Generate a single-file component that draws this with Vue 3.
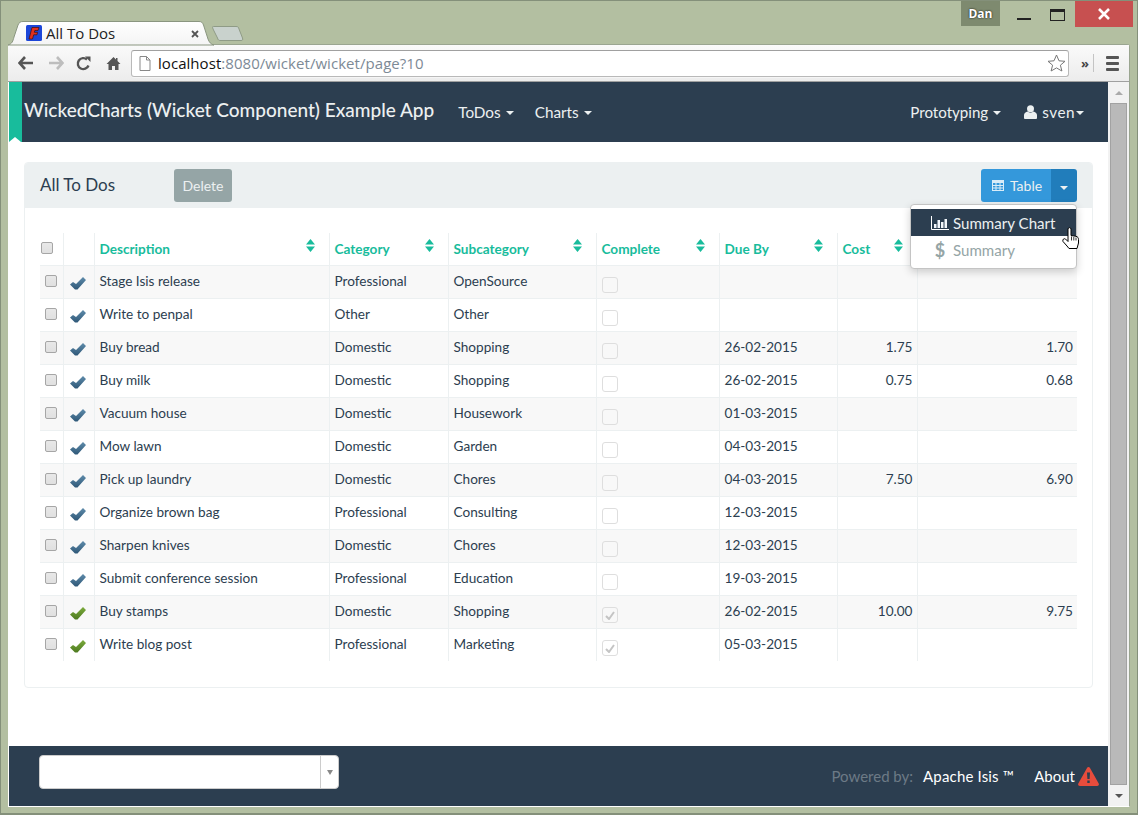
<script setup>
const rows = [
  { d: 'Stage Isis release', c: 'Professional', s: 'OpenSource', due: '', cost: '', x: '' },
  { d: 'Write to penpal', c: 'Other', s: 'Other', due: '', cost: '', x: '' },
  { d: 'Buy bread', c: 'Domestic', s: 'Shopping', due: '26-02-2015', cost: '1.75', x: '1.70' },
  { d: 'Buy milk', c: 'Domestic', s: 'Shopping', due: '26-02-2015', cost: '0.75', x: '0.68' },
  { d: 'Vacuum house', c: 'Domestic', s: 'Housework', due: '01-03-2015', cost: '', x: '' },
  { d: 'Mow lawn', c: 'Domestic', s: 'Garden', due: '04-03-2015', cost: '', x: '' },
  { d: 'Pick up laundry', c: 'Domestic', s: 'Chores', due: '04-03-2015', cost: '7.50', x: '6.90' },
  { d: 'Organize brown bag', c: 'Professional', s: 'Consulting', due: '12-03-2015', cost: '', x: '' },
  { d: 'Sharpen knives', c: 'Domestic', s: 'Chores', due: '12-03-2015', cost: '', x: '' },
  { d: 'Submit conference session', c: 'Professional', s: 'Education', due: '19-03-2015', cost: '', x: '' },
  { d: 'Buy stamps', c: 'Domestic', s: 'Shopping', due: '26-02-2015', cost: '10.00', x: '9.75', done: true },
  { d: 'Write blog post', c: 'Professional', s: 'Marketing', due: '05-03-2015', cost: '', x: '', done: true },
]
const heads = ['Description', 'Category', 'Subcategory', 'Complete', 'Due By', 'Cost']
</script>

<template>
  <div class="window">
    <div class="titlebar">
      <div class="tabstrip">
        <div class="tab">
          <svg class="tabshape" width="202" height="24" viewBox="0 0 202 24">
            <defs><linearGradient id="tabfill" x1="0" y1="0" x2="0" y2="1"><stop offset="0" stop-color="#fff" /><stop offset="1" stop-color="#f4f4f4" /></linearGradient></defs>
            <path d="M-4 24C0 23 1 20 2 16L6 4C7 1.500 8.500 .5 11 .5H187C189.500 .5 190.500 1.500 191.500 4L196 18C197 21 199 23.500 202 24Z" fill="url(#tabfill)" stroke="#8a9680" />
          </svg>
          <svg class="favicon" width="16" height="16" viewBox="0 0 16 16">
            <rect width="16" height="16" rx="1.500" fill="#1c46d8" />
            <path d="M6 2.500H13L12 5.500H8.800L8.300 7.300H11.500L11 9.800H7.700L6.500 14H3Z" fill="#e3301c" stroke="#401008" stroke-width=".7" />
          </svg>
          <span class="tabtitle">All To Dos</span>
          <svg class="tabclose" width="8" height="8" viewBox="0 0 8 8"><path d="M1 1L7 7M7 1L1 7" stroke="#555" stroke-width="1.800" /></svg>
        </div>
        <svg class="newtab" width="32" height="15" viewBox="0 0 32 15"><path d="M1.500 .5H24C26 .5 26.500 1 27 3L30.500 12C31 14 30.500 14.500 29 14.500H8C7 14.500 6 14 5.500 12L1 3C.5 1 0 .5 1.500 .5Z" fill="#c9d2cd" stroke="#8f9b86" /></svg>
      </div>
      <div class="winctrls">
        <div class="user">Dan</div>
        <div class="wbtn"><span class="min"></span></div>
        <div class="wbtn"><span class="max"></span></div>
        <div class="wclose"><svg width="14" height="12" viewBox="0 0 14 12"><path d="M2 1L12 11M12 1L2 11" stroke="#fff" stroke-width="2.600" /></svg></div>
      </div>
    </div>

    <div class="chrome">
      <div class="toolbar">
        <svg class="navicon first" width="16" height="14" viewBox="0 0 16 14"><path d="M7 1L1.500 7L7 13M2 7H15" fill="none" stroke="#555" stroke-width="2.600" /></svg>
        <svg class="navicon" width="16" height="14" viewBox="0 0 16 14"><path d="M9 1L14.500 7L9 13M14 7H1" fill="none" stroke="#bdbdbd" stroke-width="2.600" /></svg>
        <svg class="navicon reload" width="15" height="15" viewBox="0 0 15 15"><path d="M12.500 9.500A5.500 5.500 0 1 1 11 3.500" fill="none" stroke="#555" stroke-width="2.400" /><path d="M9 0.500H14.500V6Z" fill="#555" /></svg>
        <svg class="navicon" width="15" height="15" viewBox="0 0 15 15"><path d="M7.500 1L0.500 8H2.500V14H6V10H9V14H12.500V8H14.500L11.500 5V2H10V3.500Z" fill="#555" /></svg>
        <div class="omnibox">
          <svg width="12" height="15" viewBox="0 0 12 15"><path d="M1 .5H7.500L11 4V14.500H1Z M7.500 .5V4H11" fill="#fff" stroke="#888" /></svg>
          <span class="url"><b>localhost</b>:8080/wicket/wicket/page?10</span>
          <svg class="star" width="19" height="18" viewBox="0 0 19 18"><path d="M9.500 1L12 6.800L18 7.300L13.400 11.200L14.900 17L9.500 13.900L4.100 17L5.600 11.200L1 7.300L7 6.800Z" fill="#fff" stroke="#777" /></svg>
        </div>
        <span class="chev">»</span>
        <span class="tsep"></span>
        <div class="menu"><i></i><i></i><i></i></div>
      </div>

      <div class="viewport">
        <div class="page">
          <nav class="navbar">
            <div class="brandbar"></div>
            <span class="brand">WickedCharts (Wicket Component) Example App</span>
            <span class="navlink first">ToDos <i class="caret"></i></span>
            <span class="navlink">Charts <i class="caret"></i></span>
            <span class="spacer"></span>
            <span class="navlink proto">Prototyping <i class="caret"></i></span>
            <span class="navlink usr">
              <svg width="13" height="14" viewBox="0 0 13 14"><circle cx="6.500" cy="3.800" r="3.500" fill="#ecf0f1" /><path d="M0 13V10C0 8 2 7 3.500 6.500C5 8 8 8 9.500 6.500C11 7 13 8 13 10V13C13 13.500 12.500 14 12 14H1C.5 14 0 13.500 0 13Z" fill="#ecf0f1" /></svg>
              <span class="svenname">sven</span><i class="caret tight"></i>
            </span>
          </nav>

          <main class="main">
            <section class="panel">
              <header class="panelhead">
                <h1>All To Dos</h1>
                <button class="delete">Delete</button>
                <span class="spacer"></span>
                <div class="btngroup">
                  <button class="tablebtn">
                    <svg width="12" height="11" viewBox="0 0 12 11"><path d="M0 0H12V11H0Z M1 3V5H3.500V3Z M4.500 3V5H7.500V3Z M8.500 3V5H11V3Z M1 6V7.500H3.500V6Z M4.500 6V7.500H7.500V6Z M8.500 6V7.500H11V6Z M1 8.500V10H3.500V8.500Z M4.500 8.500V10H7.500V8.500Z M8.500 8.500V10H11V8.500Z" fill="#d9ecf8" fill-rule="evenodd" />
                    </svg>
                    Table
                  </button>
                  <button class="caretbtn"><i class="caret"></i></button>
                </div>
                <div class="dropdown">
                  <div class="ditem active">
                    <svg width="18" height="14" viewBox="0 0 18 14"><path d="M.5 0V13.500H18" fill="none" stroke="#fff" /><path d="M3 8H5.500V12H3Z M6.500 4H9V12H6.500Z M10 6H12.500V12H10Z M13.500 3H16V12H13.500Z" fill="#f2f6fa" /></svg>
                    <span>Summary Chart</span>
                  </div>
                  <div class="ditem">
                    <span class="dollar">$</span>
                    <span>Summary</span>
                  </div>
                </div>
                <svg class="cursor" width="17" height="22" viewBox="0 0 17 22"><path d="M6 2C6 .2 9 .2 9 2V8.500L14 9.300C15.800 9.700 16.500 11 16.500 12.500V16L15 21.500H7L5 19L1 14.500C.2 12.500 2 11 3.500 12L6 14.500Z" fill="#fff" stroke="#000" /><path d="M9.500 9.500V13.500M11.800 10V13.500M14 10.500V13.500" stroke="#000" stroke-width=".8" /></svg>
              </header>
              <div class="panelbody">
                <table class="grid">
                  <colgroup>
                    <col class="c1" /><col class="c2" /><col class="c3" /><col class="c4" /><col class="c5" /><col class="c6" /><col class="c7" /><col class="c8" /><col />
                  </colgroup>
                  <thead>
                    <tr>
                      <th class="boxcell"><span class="cb head"></span></th>
                      <th></th>
                      <th v-for="h in heads" :key="h">
                        <div class="th">
                          <span>{{ h }}</span>
                          <svg width="9" height="13" viewBox="0 0 9 13"><path d="M4.500 0L9 5.500H0Z M0 7.500H9L4.500 13Z" fill="#18bc9c" /></svg>
                        </div>
                      </th>
                      <th></th>
                    </tr>
                  </thead>
                  <tbody>
                    <tr v-for="(r, i) in rows" :key="r.d" :class="{ odd: i % 2 === 0 }">
                      <td class="boxcell"><span class="cb"></span></td>
                      <td class="checkcell">
                        <svg width="16" height="13" viewBox="0 0 16 13">
                          <defs>
                            <linearGradient id="chkb" x1="0" y1="0" x2="0" y2="1"><stop offset="0" stop-color="#5f8cab" /><stop offset="1" stop-color="#2f5878" /></linearGradient>
                            <linearGradient id="chkg" x1="0" y1="0" x2="0" y2="1"><stop offset="0" stop-color="#7cab3c" /><stop offset="1" stop-color="#4d7a20" /></linearGradient>
                          </defs>
                          <path d="M0 7.500L3 5L6 7L13 0L16 3L7.500 12.500H5Z" :fill="r.done ? 'url(#chkg)' : 'url(#chkb)'" />
                        </svg>
                      </td>
                      <td>{{ r.d }}</td>
                      <td>{{ r.c }}</td>
                      <td>{{ r.s }}</td>
                      <td class="completecell"><span class="ccb"><svg v-if="r.done" width="10" height="9" viewBox="0 0 10 9"><path d="M1 5L4 8L9 1" fill="none" stroke="#c4c4c4" stroke-width="2" /></svg></span></td>
                      <td>{{ r.due }}</td>
                      <td class="num">{{ r.cost }}</td>
                      <td class="num">{{ r.x }}</td>
                    </tr>
                  </tbody>
                </table>
              </div>
            </section>
          </main>

          <footer class="footer">
            <div class="select"><span class="selectarrow"><i></i></span></div>
            <span class="spacer"></span>
            <span class="powered">Powered by:</span>
            <span class="flink isis">Apache Isis ™</span>
            <span class="flink about">About</span>
            <svg class="warn" width="21" height="19" viewBox="0 0 21 19"><path d="M10.500 0C11.200 0 11.700.4 12 1L20.700 16.500C21.300 17.700 20.500 19 19.200 19H1.800C.5 19 -.3 17.700.3 16.500L9 1C9.300.4 9.800 0 10.500 0Z" fill="#e74c3c" /><path d="M9 5.500H12L11.600 12H9.400Z M9.300 13.500H11.700V16H9.300Z" fill="#2c3e50" /></svg>
          </footer>
        </div>
        <div class="scrollbar">
          <div class="sbbtn"><i class="up"></i></div>
          <div class="thumb"></div>
          <div class="sbbtn"><i class="down"></i></div>
        </div>
      </div>
    </div>
  </div>
</template>

<style>
html, body { margin: 0; height: 100%; overflow: hidden; }
</style>

<style scoped>
* { box-sizing: border-box; }
.window {
  width: 1138px; height: 815px; background: #b3bfa1; border: 1px solid #84907a;
  border-bottom-width: 2px; padding: 0 7px 6px 7px; display: flex; flex-direction: column;
  font-family: Lato, sans-serif; color: #2c3e50; overflow: hidden;
}
.titlebar { height: 43px; display: flex; justify-content: space-between; flex: none; }
.tabstrip { display: flex; align-items: flex-end; padding-left: 4px; margin-bottom: -1px; position: relative; z-index: 1; }
.tab { position: relative; width: 202px; height: 24px; display: flex; align-items: center; padding-left: 14px; font-family: "Open Sans", sans-serif; font-size: 15px; color: #222; }
.tabshape { position: absolute; left: 0; top: 0; overflow: visible; }
.favicon, .tabtitle, .tabclose { position: relative; }
.tabtitle { margin-left: 4px; width: 145px; }
.tabclose { margin-top: 1px; }
.newtab { margin: 0 0 4px -2px; }
.winctrls { display: flex; align-items: flex-start; margin-right: -3px; }
.user { width: 39px; height: 25px; background: #7e8a6f; color: #fff; font: 700 12px "Open Sans", sans-serif; display: flex; align-items: center; justify-content: center; text-shadow: 0 0 2px #000; }
.wbtn { width: 37.500px; height: 25px; display: flex; align-items: center; justify-content: center; }
.min { width: 14px; height: 2px; background: #222; margin-top: 11px; margin-left: 11px; }
.max { width: 15px; height: 12px; border: 1.500px solid #222; border-top-width: 3px; margin-top: 2px; margin-left: 3px; }
.wclose { width: 58px; height: 26px; background: #c75050; display: flex; align-items: center; justify-content: center; }
.chrome { flex: 1; display: flex; flex-direction: column; background: #fff; border: 1px solid #9aa590; border-bottom: 1px solid #fff; border-left: 0; border-radius: 3px 3px 0 0; min-height: 0; }
.toolbar { height: 37px; flex: none; background: linear-gradient(#fafafa, #ececec); display: flex; align-items: center; padding: 0 0 0 10px; border-bottom: 1px solid #a0a0a0; }
.navicon { margin-right: 12px; flex: none; }
.navicon.first { margin-right: 14px; }
.navicon.reload { margin-right: 15px; }
.omnibox { width: 938px; height: 27px; margin-left: -2px; background: #fff; border: 1px solid #b9b9b9; border-top-color: #a0a0a0; border-radius: 3px; display: flex; align-items: center; padding: 0 2px 0 7px; box-shadow: 0 1px 0 #f5f5f5; }
.url { font: 15px "Open Sans", sans-serif; color: #7d8a96; margin-left: 7px; flex: 1; letter-spacing: .05px; }
.url b { font-weight: 400; color: #111; }
.chev { font: 700 13px "Open Sans", sans-serif; color: #444; margin-left: 12px; }
.tsep { width: 1px; height: 18px; background: #c4c4c4; margin-left: 4px; }
.menu { margin-left: 12px; display: flex; flex-direction: column; gap: 3px; }
.menu i { display: block; width: 13px; height: 3px; background: #555; border-radius: 1px; }
.viewport { flex: 1; display: flex; min-height: 0; padding-left: 1px; }
.page { width: 1099px; flex: none; display: flex; flex-direction: column; }
.spacer { flex: 1; }
.navbar { position: relative; height: 60px; flex: none; background: #2c3e50; display: flex; align-items: center; padding: 0 24px 0 15px; color: #ecf0f1; }
.brandbar { position: absolute; left: 0; top: 0; width: 13px; height: 60px; background: #18bc9c; }
.brandbar::after { content: ""; position: absolute; left: 0; bottom: 0; border: 6.500px solid transparent; border-top: 0; border-bottom: 5px solid #fff; }
.brand { font-size: 19px; font-weight: 500; margin-top: -5px; white-space: nowrap; }
.navlink { font-size: 15.300px; display: flex; align-items: center; white-space: nowrap; margin-right: 21px; }
.navlink.first { margin-left: 24px; }
.navlink.proto { font-size: 15.100px; margin-right: 20px; }
.navlink.usr { margin-right: 0; margin-left: 3px; }
.navlink svg { margin-right: 5px; }
.svenname { letter-spacing: .5px; }
.caret { display: inline-block; width: 0; height: 0; border: 4px solid transparent; border-bottom: 0; border-top: 4px solid currentColor; margin-left: 5px; margin-top: 1px; }
.caret.tight { margin-left: 1px; }
.main { flex: 1; padding: 20px 15px 0; }
.panel { height: 526px; border: 1px solid #ecf0f1; border-radius: 4px; }
.panelhead { position: relative; height: 45px; background: #ecf0f1; display: flex; align-items: center; padding: 0 15px; border-radius: 3px 3px 0 0; }
h1 { margin: -2px 0 0; font-size: 17px; font-weight: 400; width: 134px; }
.delete { width: 58px; height: 33px; border: 0; border-radius: 3px; background: #95a5a6; color: #ecf0f1; font: 14px Lato, sans-serif; padding: 0; }
.btngroup { display: flex; height: 33px; }
.tablebtn { width: 70px; border: 0; border-radius: 3px 0 0 3px; background: #3498db; color: #ecf0f1; font: 14px Lato, sans-serif; padding: 0 0 0 2px; display: flex; align-items: center; justify-content: center; gap: 6px; }
.caretbtn { width: 26px; border: 0; border-radius: 0 3px 3px 0; background: #217dbb; color: #ecf0f1; padding: 0; }
.caretbtn .caret { margin: 0; }
.dropdown { position: absolute; right: 15px; top: 41px; width: 167px; height: 65px; background: #fff; border: 1px solid #c4c4c4; border-radius: 4px; padding: 4px 0; box-shadow: 0 3px 8px rgba(0,0,0,.18); z-index: 2; }
.ditem { height: 27px; display: flex; align-items: center; font-size: 15.100px; color: #95a5a6; }
.ditem.active { background: #2c3e50; color: #ecf0f1; }
.ditem svg { margin-left: 20px; margin-right: 4px; }
.dollar { width: 18px; margin-left: 20px; margin-right: 4px; text-align: center; font-size: 18px; font-weight: 700; }
.cursor { position: absolute; right: 13px; top: 64px; z-index: 3; }
.panelbody { padding: 25px 15px 0; }
.grid { width: 1037px; table-layout: fixed; border-collapse: collapse; font-size: 13.600px; }
.c1 { width: 23px; } .c2 { width: 31px; } .c3 { width: 235px; } .c4 { width: 119px; }
.c5 { width: 148px; } .c6 { width: 123px; } .c7 { width: 118px; } .c8 { width: 80px; }
th, td { padding: 0 5px; border-left: 1px solid #ecf0f1; text-align: left; white-space: nowrap; }
th:first-child, td:first-child { border-left: 0; }
th { height: 32px; border-bottom: 1px solid #ecf0f1; color: #18bc9c; font-weight: 700; font-size: 13.600px; vertical-align: bottom; padding-bottom: 8px; }
td { height: 33px; border-bottom: 1px solid #ecf0f1; padding-bottom: 1px; }
tbody tr:last-child td { border-bottom: 0; }
tr.odd td { background: #f8f8f8; }
.th { display: flex; justify-content: space-between; padding-right: 9px; }
.th svg { margin-top: -2px; }
.num { text-align: right; padding-right: 4px; }
.boxcell { padding: 0; text-align: left; }
.cb { display: inline-block; width: 12px; height: 12px; border: 1px solid #a6a6a6; border-radius: 2px; background: linear-gradient(#e8e8e8, #e0e0e0); vertical-align: middle; margin-left: 5px; margin-top: -4px; }
th.boxcell { padding-bottom: 0; vertical-align: top; }
th .cb.head { display: block; margin: 9px 0 0 1px; }
.checkcell { padding-bottom: 0; }
.checkcell svg { display: block; margin: 4px 0 0 1px; }
.completecell { padding-top: 7px; padding-bottom: 0; }
.ccb { display: flex; align-items: center; justify-content: center; width: 16px; height: 16px; border: 1px solid #dedede; border-radius: 3px; background: #fff; }
tr.odd .ccb { background: #f8f8f8; }
.footer { height: 60px; flex: none; background: #2c3e50; display: flex; align-items: center; padding: 0 9px 0 30px; }
.select { position: relative; width: 300px; height: 34px; background: #fff; border: 1px solid #ccc; border-radius: 4px; align-self: flex-start; margin-top: 9px; }
.selectarrow { position: absolute; right: 0; top: 0; height: 100%; width: 18px; border-left: 1px solid #ccc; display: flex; align-items: center; justify-content: center; }
.selectarrow i { border: 3.500px solid transparent; border-bottom: 0; border-top: 5px solid #888; }
.powered { font-size: 15px; color: #6c7a86; margin-right: 10px; }
.flink { font-size: 15px; color: #fff; }
.isis { margin-right: 20px; letter-spacing: .17px; }
.about { margin-right: 3px; }
.warn { flex: none; }
.scrollbar { flex: 1; background: #f2f2f2; display: flex; flex-direction: column; align-items: center; }
.sbbtn { height: 21px; flex: none; display: flex; align-items: center; justify-content: center; width: 100%; }
.thumb { flex: 1; width: 17px; background: #b9b9b9; border: 1px solid #a2a2a2; }
.up { border: 4px solid transparent; border-top: 0; border-bottom: 4px solid #aaa; }
.down { border: 4px solid transparent; border-bottom: 0; border-top: 4px solid #555; }
</style>
